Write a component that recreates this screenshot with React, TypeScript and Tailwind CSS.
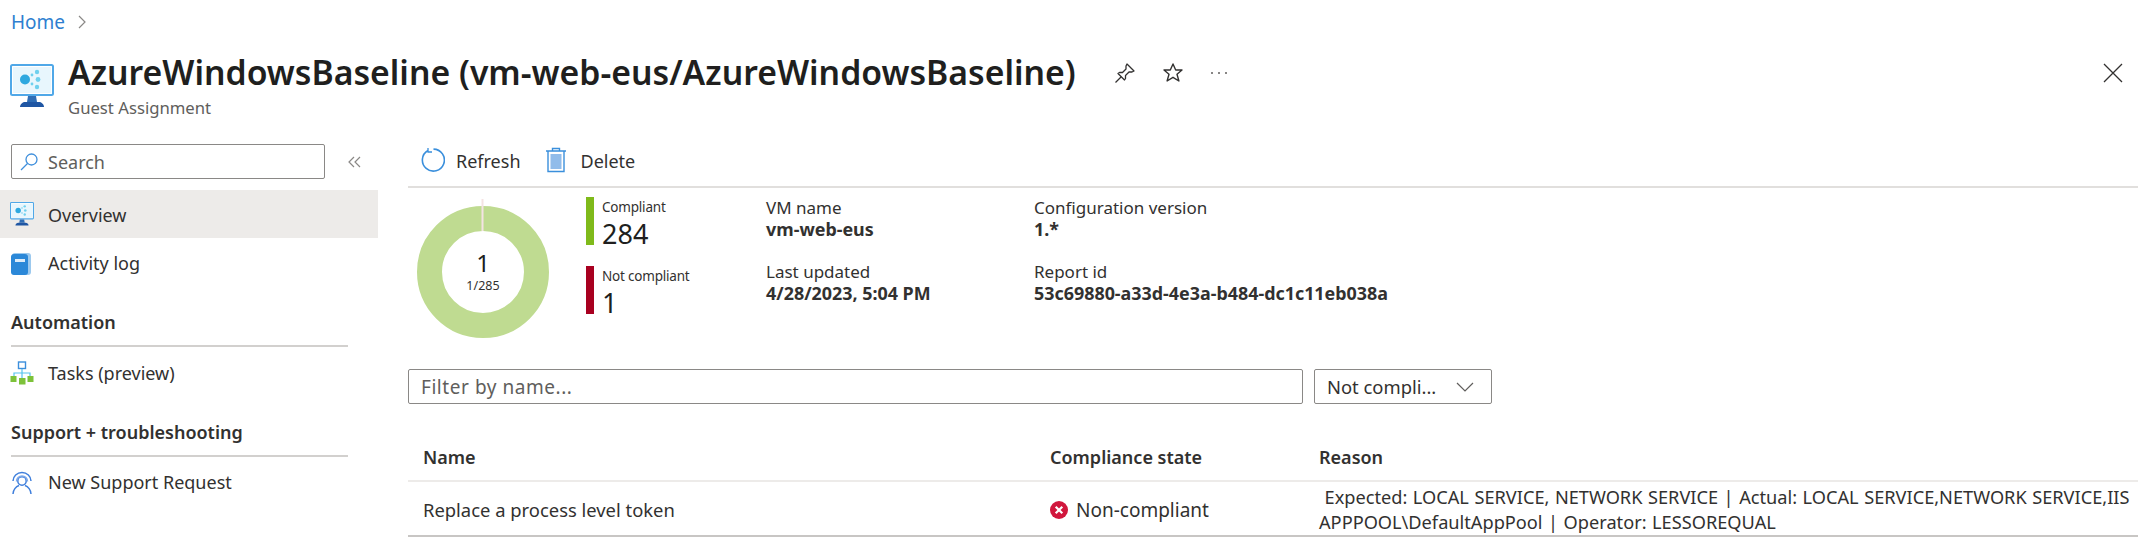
import React from "react";

const VmIcon = ({ size }: { size: number }) => (
  <svg width={size} height={size} viewBox="0 0 44 44" className="shrink-0">
    <rect x="1" y="1" width="42" height="30" rx="1.5" fill="#fff" stroke="#50a8e8" strokeWidth="2" />
    <rect x="3" y="3" width="38" height="26" fill="#e8f6fd" />
    <circle cx="15" cy="15.5" r="5" fill="#2fa8df" />
    <circle cx="27" cy="8" r="2.2" fill="#6fd0ee" />
    <circle cx="28" cy="15.5" r="2.4" fill="#6fd0ee" />
    <circle cx="27" cy="23" r="2.2" fill="#6fd0ee" />
    <circle cx="22" cy="11" r="1.4" fill="#6fd0ee" />
    <circle cx="22" cy="20" r="1.4" fill="#6fd0ee" />
    <path d="M18 32h8l1 6H17z" fill="#2f6db5" />
    <path d="M10 43c0-3 3-5 5-5h14c2 0 5 2 5 5z" fill="#1f56a3" />
  </svg>
);

const BookIcon = () => (
  <svg width="22" height="24" viewBox="0 0 22 24" className="shrink-0">
    <rect x="2" y="1" width="19" height="22" rx="3" fill="#9cc9ee" />
    <rect x="1" y="2" width="17" height="21" rx="3" fill="#2b88d8" />
    <rect x="5" y="7" width="10" height="3" fill="#dcebf8" />
  </svg>
);

const TasksIcon = () => (
  <svg width="24" height="24" viewBox="0 0 24 24" className="shrink-0">
    <rect x="8.5" y="1" width="7" height="6.5" fill="#fff" stroke="#3c8fdc" strokeWidth="1.4" />
    <path d="M12 8v4M4 15v-3h16v3M12 12v5" fill="none" stroke="#56c4ee" strokeWidth="1.2" />
    <rect x="0.5" y="15" width="6" height="6" fill="#7dc23a" />
    <rect x="9" y="17" width="6.5" height="6.5" fill="#7dc23a" />
    <rect x="17.5" y="15" width="6" height="6" fill="#7dc23a" />
  </svg>
);

const SupportIcon = () => (
  <svg width="24" height="24" viewBox="0 0 24 24" fill="none" stroke="#3f7fdc" strokeWidth="1.5" className="shrink-0">
    <circle cx="12" cy="10" r="4.2" />
    <path d="M3 10a9 8.5 0 0 1 18 0" />
    <path d="M6.5 10.5a5.5 5.5 0 0 1 11 0" stroke="#7ea9ea" />
    <path d="M3 23c0-4 3-7.5 6-8.5M21 23c0-4-3-7.5-6-8.5" />
  </svg>
);

const NavRow = ({ icon, label, cls, textCls = "" }: { icon: React.ReactNode; label: string; cls: string; textCls?: string }) => (
  <div className={`flex items-center pl-[10px] ${cls}`}>
    <div className="w-[38px] flex items-center">{icon}</div>
    <span className={`text-[18px] text-[#323130] ${textCls}`}>{label}</span>
  </div>
);

const SectionHead = ({ label, cls }: { label: string; cls: string }) => (
  <div className={`ml-[11px] mr-[30px] h-[47px] flex items-center border-b-2 border-[#d2d0ce] text-[18px] font-semibold text-[#323130] ${cls}`}>
    {label}
  </div>
);

const Metric = ({ color, label, value }: { color: string; label: string; value: string }) => (
  <div className="flex h-[48px]">
    <div className={`w-[8px] h-full ${color}`} />
    <div className="ml-[8px] flex flex-col">
      <span className="text-[13.5px] leading-[18px] mt-[1px] text-[#323130] tracking-[-0.2px]">{label}</span>
      <span className="text-[27px] leading-[32px] mt-[2px] text-[#201f1e]">{value}</span>
    </div>
  </div>
);

const Prop = ({ label, value }: { label: string; value: string }) => (
  <div className="flex flex-col h-[64px]">
    <span className="text-[17px] leading-[22px] text-[#323130]">{label}</span>
    <span className="text-[17.9px] leading-[20px] font-bold text-[#323130]">{value}</span>
  </div>
);

export default function App() {
  return (
    <div className="w-[2148px] h-[551px] bg-white overflow-hidden font-['Noto_Sans','Open_Sans',sans-serif]">
      <div className="h-[44px] pl-[11px] flex items-center gap-[12px]">
        <span className="text-[19px] text-[#2f7fd0]">Home</span>
        <svg width="10" height="14" viewBox="0 0 10 14" fill="none" stroke="#8a8886" strokeWidth="1.2">
          <path d="M2 1l6 6-6 6" />
        </svg>
      </div>

      <div className="h-[86px] flex items-start pl-[10px] pr-[24px]">
        <div className="mt-[20px] w-[58px]"><VmIcon size={44} /></div>
        <div className="flex flex-col">
          <div className="flex items-center h-[57px]">
            <h1 className="text-[33.75px] leading-[57px] font-semibold text-[#201f1e]">
              AzureWindowsBaseline (vm-web-eus/AzureWindowsBaseline)
            </h1>
          </div>
          <span className="text-[16.7px] leading-[20px] -mt-[3px] text-[#605e5c]">Guest Assignment</span>
        </div>
        <div className="flex items-center h-[58px] ml-[38px] gap-[26px] text-[#323130]">
          <svg width="22" height="22" viewBox="0 0 22 22" fill="none" stroke="#323130" strokeWidth="1.3" strokeLinejoin="round">
            <path d="M13 2l7 7-2 1-3 0-3.5 3.5 0 3-1 1.5-6.5-6.5 1.5-1 3 0L12 7l0-3z" />
            <path d="M7 15l-5.5 5.5" />
          </svg>
          <svg width="22" height="22" viewBox="0 0 22 22" fill="none" stroke="#323130" strokeWidth="1.4" strokeLinejoin="round">
            <path d="M11 2l2.7 6h6.3l-5 4.2 1.9 6.8L11 15.3 5.1 19l1.9-6.8L2 8h6.3z" />
          </svg>
          <svg width="18" height="4" viewBox="0 0 18 4" fill="#605e5c">
            <circle cx="2" cy="2" r="1" /><circle cx="9" cy="2" r="1" /><circle cx="16" cy="2" r="1" />
          </svg>
        </div>
        <div className="ml-auto h-[58px] flex items-center">
          <svg width="22" height="22" viewBox="0 0 22 22" fill="none" stroke="#323130" strokeWidth="1.3">
            <path d="M2 2l18 18M20 2L2 20" />
          </svg>
        </div>
      </div>

      <div className="flex">
        <aside className="w-[378px] shrink-0">
          <div className="mt-[14px] flex items-center pl-[11px] h-[35px]">
            <div className="w-[314px] h-[35px] border border-[#8a8886] rounded-[2px] flex items-center pl-[8px] gap-[9px]">
              <svg width="19" height="19" viewBox="0 0 19 19" fill="none" stroke="#3f8fdc" strokeWidth="1.3">
                <circle cx="11.5" cy="7.5" r="5.5" /><path d="M7.5 11.5L1 18" />
              </svg>
              <span className="text-[18px] text-[#605e5c] pt-[1px]">Search</span>
            </div>
            <svg className="ml-[23px]" width="13" height="12" viewBox="0 0 13 12" fill="none" stroke="#8a8886" strokeWidth="1.2">
              <path d="M6 1L1 6l5 5M12 1L7 6l5 5" />
            </svg>
          </div>
          <div className="mt-[11px]">
            <NavRow icon={<VmIcon size={24} />} label="Overview" cls="h-[48px] bg-[#edebe9]" textCls="pt-[2px]" />
            <div className="h-[2px]" />
            <NavRow icon={<BookIcon />} label="Activity log" cls="h-[48px] pb-[1px]" />
          </div>
          <SectionHead label="Automation" cls="mt-[12px]" />
          <NavRow icon={<TasksIcon />} label="Tasks (preview)" cls="h-[51px]" textCls="pt-[1px]" />
          <SectionHead label="Support + troubleshooting" cls="mt-[12px]" />
          <NavRow icon={<SupportIcon />} label="New Support Request" cls="h-[51px]" />
        </aside>

        <main className="flex-1 pl-[30px] pr-[10px]">
          <div className="h-[58px] border-b-2 border-[#e1dfdd] flex items-center pl-[12px] pt-[3px]">
            <svg width="25" height="25" viewBox="0 0 25 25" fill="none" stroke="#3a8fdc" strokeWidth="1.6">
              <path d="M8 3.5a11 11 0 1 0 5.5-1.4" /><path d="M8 1v4h4" strokeWidth="1.3" />
            </svg>
            <span className="ml-[11px] text-[18px] text-[#323130] pt-[4px]">Refresh</span>
            <svg className="ml-[24px]" width="22" height="26" viewBox="0 0 22 26" fill="none" stroke="#3a8fdc" strokeWidth="1.4">
              <path d="M1 4h20M7.5 4V1.5h7V4" />
              <path d="M3 4v20.5h16V4" />
              <rect x="5.5" y="7" width="11" height="15" fill="#91bcea" stroke="none" />
            </svg>
            <span className="ml-[14px] text-[18px] text-[#323130] pt-[4px]">Delete</span>
          </div>

          <div className="flex h-[136px]">
            <div className="relative w-[168px] h-[134px] pl-[9px] pt-[10px] shrink-0">
              <svg width="134" height="140" viewBox="0 0 134 140">
                <circle cx="66" cy="74" r="53.5" fill="none" stroke="#bfdb91" strokeWidth="25" />
                <path d="M65.5 1v32" stroke="#f4e3e3" strokeWidth="2" />
              </svg>
              <div className="absolute left-[9px] top-[62px] w-[132px] flex flex-col items-center">
                <span className="text-[24px] leading-[26px] text-[#201f1e]">1</span>
                <span className="text-[12.5px] leading-[20px] text-[#323130]">1/285</span>
              </div>
            </div>
            <div className="pl-[10px] pt-[9px] w-[190px] flex flex-col gap-[21px] shrink-0">
              <Metric color="bg-[#7fba1a]" label="Compliant" value="284" />
              <Metric color="bg-[#a80020]" label="Not compliant" value="1" />
            </div>
            <div className="w-[268px] pt-[9px] shrink-0">
              <Prop label="VM name" value="vm-web-eus" />
              <Prop label="Last updated" value="4/28/2023, 5:04 PM" />
            </div>
            <div className="pt-[9px]">
              <Prop label="Configuration version" value="1.*" />
              <Prop label="Report id" value="53c69880-a33d-4e3a-b484-dc1c11eb038a" />
            </div>
          </div>

          <div className="mt-[45px] flex gap-[11px]">
            <div className="w-[895px] h-[35px] border border-[#8a8886] rounded-[2px] flex items-center pl-[12px] pt-[1px] text-[19px] tracking-[0.55px] text-[#605e5c]">
              Filter by name...
            </div>
            <div className="w-[178px] h-[35px] border border-[#8a8886] rounded-[2px] flex items-center justify-between pl-[12px] pr-[17px] text-[18.4px] text-[#323130]">
              <span>Not compli...</span>
              <svg width="18" height="10" viewBox="0 0 18 10" fill="none" stroke="#605e5c" strokeWidth="1.2">
                <path d="M1 1l8 8 8-8" />
              </svg>
            </div>
          </div>

          <div className="mt-[31px] h-[47px] pb-[1px] flex items-center border-b-2 border-[#edebe9] text-[18px] font-semibold text-[#323130]">
            <div className="w-[642px] pl-[15px]">Name</div>
            <div className="w-[269px]">Compliance state</div>
            <div>Reason</div>
          </div>
          <div className="h-[55px] flex items-center border-b-2 border-[#c8c6c4] text-[18.4px] text-[#323130]">
            <div className="w-[642px] pl-[15px] pt-[3px]">Replace a process level token</div>
            <div className="w-[269px] flex items-center gap-[8px] pt-[3px]">
              <svg width="18" height="18" viewBox="0 0 18 18">
                <circle cx="9" cy="9" r="9" fill="#d1173d" />
                <path d="M5.7 5.7l6.6 6.6M12.3 5.7l-6.6 6.6" stroke="#fff" strokeWidth="2.2" />
              </svg>
              <span className="text-[19px]">Non-compliant</span>
            </div>
            <div className="flex-1 text-[18.2px] leading-[25px] [word-spacing:0.8px] pt-[2px]">
              &nbsp;Expected: LOCAL SERVICE, NETWORK SERVICE | Actual: LOCAL SERVICE,NETWORK SERVICE,IIS APPPOOL\DefaultAppPool | Operator: LESSOREQUAL
            </div>
          </div>
        </main>
      </div>
    </div>
  );
}
